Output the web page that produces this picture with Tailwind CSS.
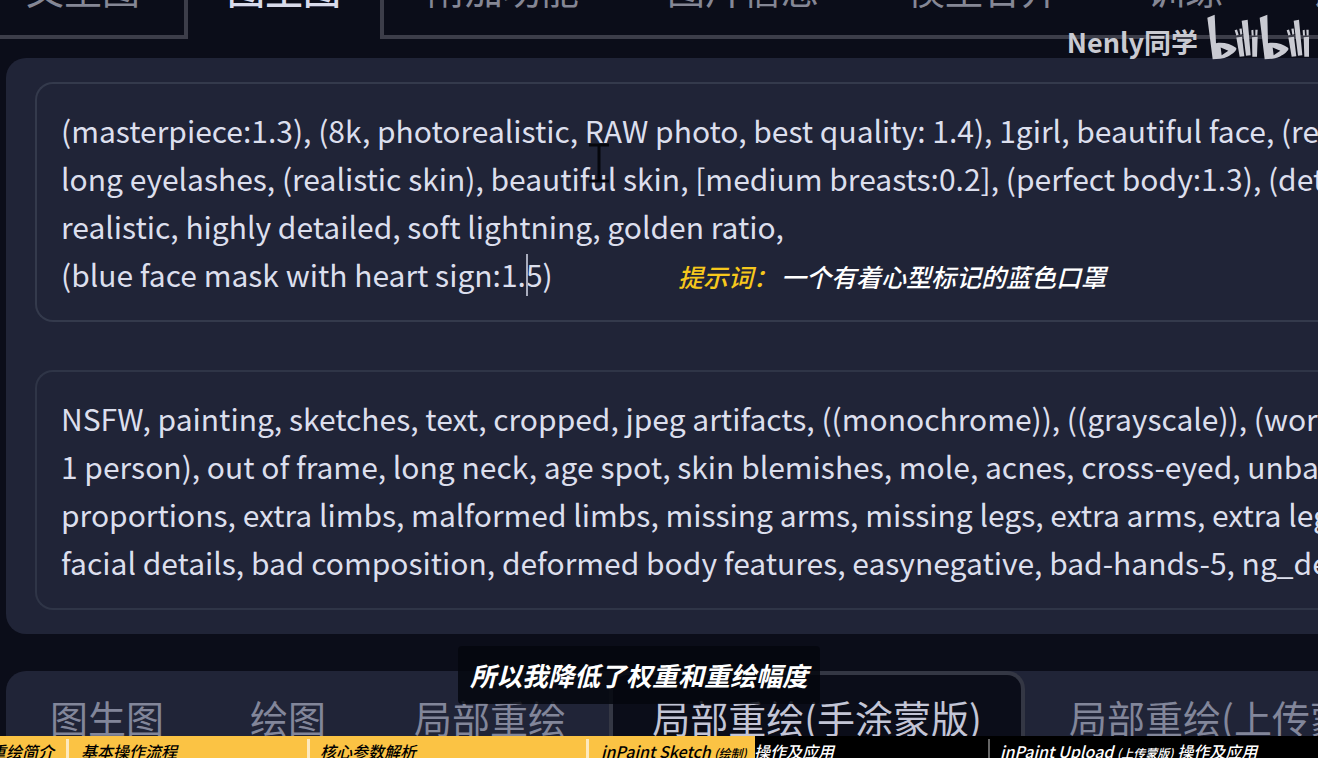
<!DOCTYPE html>
<html lang="zh-CN">
<head>
<meta charset="utf-8">
<title>图生图</title>
<script src="https://cdn.jsdelivr.net/npm/@tailwindcss/browser@4"></script>
</head>
<body class="relative flex h-screen flex-col overflow-hidden bg-[#0b0d19] font-['Noto_Sans_CJK_SC',sans-serif]">

<nav class="flex h-[39px] shrink-0 items-end overflow-hidden whitespace-nowrap text-[38px] leading-[56px] text-[#858795]">
  <button class="h-[80px] w-[188px] shrink-0 border-r-4 border-b-4 border-[#3c3d49] pb-[18px] pl-[26px] text-left">文生图</button>
  <button class="h-[80px] w-[192px] shrink-0 pb-[22px] text-center font-medium text-[#d8daea]">图生图</button>
  <div class="flex h-[80px] grow gap-[88px] border-b-4 border-l-4 border-[#3c3d49] pb-[18px] pl-[43px]">
    <button>附加功能</button>
    <button>图片信息</button>
    <button>模型合并</button>
    <button>训练</button>
    <button>设置</button>
  </div>
</nav>

<main class="flex flex-col pl-[6px] pt-[19px]">
  <section class="flex flex-col gap-12 rounded-l-[20px] bg-[#202437] py-6 pl-[29px]">
    <textarea aria-label="提示词" rows="4" wrap="off" spellcheck="false" class="block h-[240px] w-full resize-none overflow-hidden rounded-l-[18px] border-2 border-r-0 border-[#343a4c] bg-[#202437] py-[22px] pl-[24px] text-[30px] leading-[48px] text-[#dcdfed] outline-none">(masterpiece:1.3), (8k, photorealistic, RAW photo, best quality: 1.4), 1girl, beautiful face, (realistic face),
long eyelashes, (realistic skin), beautiful skin, [medium breasts:0.2], (perfect body:1.3), (detailed body),
realistic, highly detailed, soft lightning, golden ratio,
(blue face mask with heart sign:1.5)</textarea>
    <textarea aria-label="反向提示词" rows="4" wrap="off" spellcheck="false" class="block h-[240px] w-full resize-none overflow-hidden rounded-l-[18px] border-2 border-r-0 border-[#2f3547] bg-[#202437] py-[22px] pl-[24px] text-[30px] leading-[48px] text-[#dcdfed] outline-none">NSFW, painting, sketches, text, cropped, jpeg artifacts, ((monochrome)), ((grayscale)), (worst quality),
1 person), out of frame, long neck, age spot, skin blemishes, mole, acnes, cross-eyed, unbalanced,
proportions, extra limbs, malformed limbs, missing arms, missing legs, extra arms, extra legs,
facial details, bad composition, deformed body features, easynegative, bad-hands-5, ng_deepnegative</textarea>
  </section>

  <section class="mt-[37px] flex h-[120px] overflow-hidden whitespace-nowrap rounded-tl-[20px] bg-[#202437] text-[38px] leading-[56px] text-[#82869a]">
    <button class="flex shrink-0 pl-[44px] pt-[18px]">图生图</button>
    <button class="flex shrink-0 pl-[86px] pt-[18px]">绘图</button>
    <button class="flex shrink-0 pl-[88px] pr-[43px] pt-[18px]">局部重绘</button>
    <button class="flex w-[416px] shrink-0 justify-center rounded-t-[18px] border-4 border-b-0 border-[#343744] bg-[#0b0d19] pt-[14px] text-[#c3c5d6]">局部重绘(手涂蒙版)</button>
    <button class="flex shrink-0 pl-[44px] pt-[18px]">局部重绘(上传蒙版)</button>
  </section>
</main>

<div class="absolute left-[526px] top-[254px] h-[42px] w-[2px] bg-[#a9adbd]"></div>
<svg class="absolute left-[588px] top-[143px] h-[40px] w-[22px]" viewBox="0 0 22 40" fill="none" stroke="#05060c" stroke-width="3"><path d="M1 2H21M11 2V38M1 38H21"/></svg>

<p class="absolute left-[678px] top-[256px] flex whitespace-nowrap text-[25px] font-medium italic leading-10 text-white"><span class="w-[103px] text-[#f6c81c]">提示词：</span><span>一个有着心型标记的蓝色口罩</span></p>

<div class="absolute right-[7px] top-[13px] flex items-start gap-2 text-[#c9cad2]">
  <span class="text-[27px] font-bold leading-[58px]">Nenly同学</span>
  <svg class="h-[47px] w-[105px]" viewBox="470 40 315 140" fill="currentColor" role="img" aria-label="bilibili">
    <path fill-rule="evenodd" d="M474 54 496 45 500 130C520 126 545 132 560 144C566 150 550 163 536 170C522 177 504 178 490 178ZM514 143 517 166 537 153Z"/>
    <path d="M561 113 578 111 585 169 571 171ZM556 91 563 89 568 105 561 107ZM570 87 577 86 579 103 573 105ZM577 63 595 60 604 166 590 168ZM608 112 625 111 623 171 609 171ZM606 91 612 90 613 107 607 107ZM618 90 625 90 624 107 618 107Z"/>
    <path fill-rule="evenodd" d="M631 54 654 45 656 130C676 126 701 132 716 144C722 150 706 163 692 170C678 177 660 178 646 178ZM670 143 673 166 693 153Z"/>
    <path d="M717 113 734 111 741 169 727 171ZM712 91 719 89 724 105 717 107ZM726 87 733 86 735 103 729 105ZM733 63 749 60 759 166 746 168ZM763 112 779 111 779 171 765 171ZM760 91 766 90 767 107 761 107ZM771 90 778 90 778 107 772 107Z"/>
  </svg>
</div>

<p class="absolute left-[458px] top-[646px] whitespace-nowrap rounded bg-[#05070e]/85 px-[12px] py-2 text-[26px] font-bold italic leading-[42px] text-white">所以我降低了权重和重绘幅度</p>

<footer class="absolute inset-x-0 bottom-0 h-[22px] overflow-hidden bg-black text-[16px] font-medium italic leading-6 text-black">
  <div class="h-full w-[755px] bg-[#fbc344]"></div>
  <div class="absolute inset-0 flex whitespace-nowrap pt-[3px]">
    <span class="flex w-[66px] shrink-0 justify-end pr-[12px]">重绘简介</span>
    <span class="w-[241px] shrink-0 border-l-3 border-[#fde9bd] pl-[12px]">基本操作流程</span>
    <span class="w-[279px] shrink-0 border-l-3 border-[#fde9bd] pl-[10px]">核心参数解析</span>
    <span class="flex w-[402px] shrink-0 border-l-3 border-[#fde9bd] pl-[12px]"><span class="w-[153px]">inPaint Sketch <small class="text-[12px]">(绘制)</small></span><span class="text-white">操作及应用</span></span>
    <span class="border-l-2 border-[#666] pl-[10px] text-white">inPaint Upload <small class="text-[12px]">(上传蒙版)</small> 操作及应用</span>
  </div>
</footer>
</body>
</html>
